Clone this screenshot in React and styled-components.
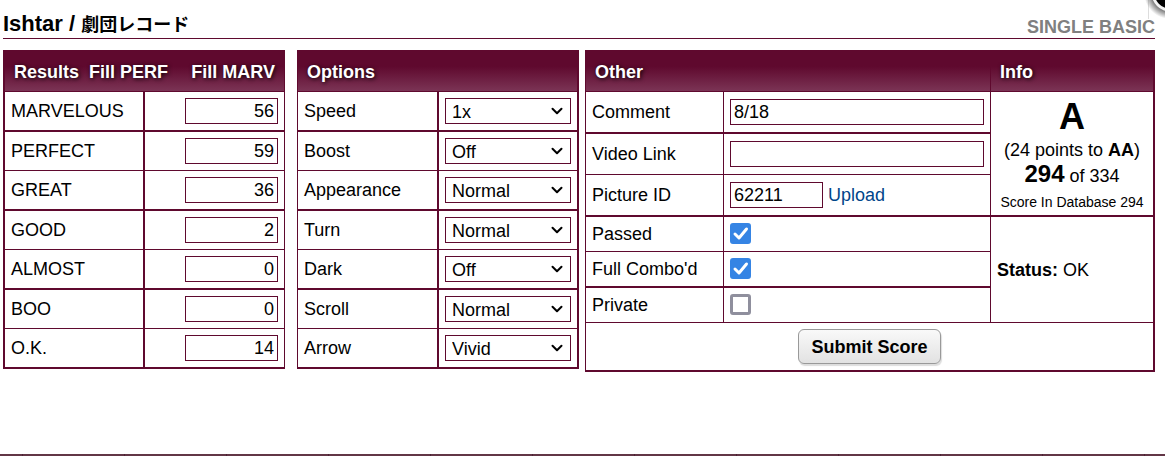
import React, { useState } from "react";
import styled, { createGlobalStyle, css } from "styled-components";

const WINE = "#5f092e";

const GlobalStyle = createGlobalStyle`
  body {
    margin: 0;
    background: #fff;
    color: #000;
    font-family: "Liberation Sans", "Noto Sans CJK JP", sans-serif;
    font-size: 18px;
    line-height: 20px;
  }
  *, *::before, *::after {
    box-sizing: border-box;
  }
`;

const Page = styled.div`
  position: relative;
  display: flex;
  flex-direction: column;
  min-height: 100vh;
  overflow: hidden;
`;

const Main = styled.main`
  padding: 10px 10px 24px 3px;
`;

const TitleBar = styled.header`
  display: flex;
  align-items: flex-end;
  justify-content: space-between;
  height: 29px;
  border-bottom: 1px solid ${WINE};
`;

const Title = styled.h1`
  margin: 0;
  font-size: 22px;
  line-height: 26px;
`;

const Artist = styled.span`
  font-size: 18px;
`;

const Mode = styled.span`
  color: #808080;
  font-weight: bold;
  line-height: 22px;
`;

const Panels = styled.form`
  display: grid;
  grid-template-columns: 282px 288px minmax(480px, 1fr);
  align-items: start;
  column-gap: 6px;
  margin-top: 11px;
`;

const OptionsSlot = styled.div`
  padding-left: 6px;
`;

const Table = styled.table`
  width: 100%;
  table-layout: fixed;
  border-collapse: separate;
  border-spacing: 0;
  border-style: solid;
  border-color: ${WINE};
  border-width: 0 ${(p) => p.$right}px 0 ${(p) => p.$left}px;
`;

const Col = styled.col`
  width: ${(p) => (p.$width ? `${p.$width}px` : "auto")};
`;

const HeadCell = styled.th`
  height: 42px;
  padding: 2px 9px 0;
  border-bottom: 1px solid ${WINE};
  background: linear-gradient(${WINE} 40%, #7b3455);
  color: #fff;
  text-align: left;
  text-shadow: 1px 1px 4px #000;
  ${(p) => p.$divided && css`border-right: 1px solid ${WINE};`}
`;

const HeadRow = styled.div`
  display: flex;
  gap: 10px;
`;

const FillButton = styled.button`
  padding: 0;
  border: 0;
  background: none;
  color: inherit;
  font: inherit;
  text-shadow: inherit;
  cursor: pointer;

  &:last-child {
    margin-left: auto;
  }
`;

const Cell = styled.td`
  height: ${(p) => p.$height || 38}px;
  padding: 0 6px;
  border: 0 solid ${WINE};
  border-right-width: ${(p) => p.$divider || 0}px;
  border-bottom-width: ${(p) => p.$line || 1}px;
  text-align: ${(p) => p.$align || "left"};
  vertical-align: middle;
`;

const TextBox = styled.input`
  display: inline-block;
  width: ${(p) => (p.$wide ? "100%" : "93px")};
  height: 26px;
  padding: 1px 3px 0;
  border: 1px solid ${WINE};
  border-radius: 0;
  background: #fff;
  color: #000;
  font: inherit;
  text-align: ${(p) => p.$align || "left"};
  vertical-align: middle;
`;

const SelectWrap = styled.div`
  display: grid;
  align-items: center;

  > * {
    grid-area: 1 / 1;
  }
`;

const Select = styled.select`
  appearance: none;
  width: 100%;
  height: 26px;
  padding: 1px 24px 0 6px;
  border: 1px solid ${WINE};
  border-radius: 0;
  background: #fff;
  color: #000;
  font: inherit;
`;

const Chevron = styled.svg`
  justify-self: end;
  margin-right: 8px;
  pointer-events: none;
`;

const CheckWrap = styled.div`
  display: grid;
  justify-content: start;
  height: 22px;

  > * {
    grid-area: 1 / 1;
  }
`;

const CheckBox = styled.input`
  appearance: none;
  width: 21px;
  height: 21px;
  margin: 0;
  border: 3px solid #8f8f9d;
  border-radius: 3px;
  background: #fff;

  &:checked {
    border-color: #3584e4;
    background: #3584e4;
  }
  & + svg {
    display: none;
    pointer-events: none;
  }
  &:checked + svg {
    display: block;
  }
`;

const UploadLink = styled.a`
  margin-left: 5px;
  color: #00458a;
  text-decoration: none;
  vertical-align: middle;
`;

const Grade = styled.div`
  font-size: 36px;
  font-weight: bold;
  line-height: 46px;
`;

const InfoLine = styled.div`
  line-height: ${(p) => p.$line || 20}px;
  white-space: nowrap;
`;

const Score = styled.strong`
  font-size: 24px;
`;

const Small = styled.div`
  font-size: 14px;
  line-height: 24px;
  white-space: nowrap;
`;

const Submit = styled.button`
  height: 35px;
  padding: 0 12px;
  border: 1px solid #999;
  border-radius: 6px;
  background: linear-gradient(#f9f9f9, #e2e2e2);
  box-shadow: 1px 2px 1px #ddd;
  color: #000;
  font: inherit;
  font-weight: bold;
  vertical-align: middle;
`;

const Footer = styled.footer`
  height: 2px;
  margin-top: auto;
  background: repeating-linear-gradient(90deg, #623646 0 22px, #4c2234 22px 23px, #623646 23px 102px);
`;

const CornerBadge = styled.svg`
  position: absolute;
  top: 0;
  right: 0;
`;

const TOTAL_STEPS = 167;

const results = [
  ["MARVELOUS", 56],
  ["PERFECT", 59],
  ["GREAT", 36],
  ["GOOD", 2],
  ["ALMOST", 0],
  ["BOO", 0],
  ["O.K.", 14],
];

const options = [
  ["Speed", "1x"],
  ["Boost", "Off"],
  ["Appearance", "Normal"],
  ["Turn", "Normal"],
  ["Dark", "Off"],
  ["Scroll", "Normal"],
  ["Arrow", "Vivid"],
];

// rules alternate between thick and thin
const rule = (i) => (i % 2 === 0 ? 2 : 1);

const Results = () => {
  const [scores, setScores] = useState(results.map((r) => r[1]));

  const change = (i, value) => {
    setScores(scores.map((s, n) => (n === i ? value : s)));
  };

  // give the steps that are left to one judgement
  const fill = (target) => {
    const others = scores.reduce((sum, s, n) => (n === target ? sum : sum + Number(s)), 0);
    change(target, Math.max(0, TOTAL_STEPS - others));
  };

  return (
    <Table $left={2} $right={1}>
      <colgroup>
        <Col $width={140} />
        <Col />
      </colgroup>
      <thead>
        <tr>
          <HeadCell colSpan={2}>
            <HeadRow>
              <span>Results</span>
              <FillButton type="button" onClick={() => fill(1)}>Fill PERF</FillButton>
              <FillButton type="button" onClick={() => fill(0)}>Fill MARV</FillButton>
            </HeadRow>
          </HeadCell>
        </tr>
      </thead>
      <tbody>
        {results.map(([name], i) => (
          <tr key={name}>
            <Cell $height={38 + rule(i)} $line={rule(i)} $divider={2}>
              <label htmlFor={name}>{name}</label>
            </Cell>
            <Cell $height={38 + rule(i)} $line={rule(i)} $align="right">
              <TextBox
                id={name}
                $align="right"
                value={scores[i]}
                onChange={(e) => change(i, e.target.value)}
              />
            </Cell>
          </tr>
        ))}
      </tbody>
    </Table>
  );
};

const OptionSelect = ({ id, value }) => (
  <SelectWrap>
    <Select id={id} defaultValue={value}>
      <option>{value}</option>
    </Select>
    <Chevron width="12" height="8" viewBox="0 0 12 8" aria-hidden="true">
      <path
        d="M1.5 1.7 L6 6.2 L10.5 1.7"
        fill="none"
        stroke="#000"
        strokeWidth="2"
        strokeLinecap="round"
        strokeLinejoin="round"
      />
    </Chevron>
  </SelectWrap>
);

const Options = () => (
  <Table $left={1} $right={2}>
    <colgroup>
      <Col $width={141} />
      <Col />
    </colgroup>
    <thead>
      <tr>
        <HeadCell colSpan={2}>Options</HeadCell>
      </tr>
    </thead>
    <tbody>
      {options.map(([name, value], i) => (
        <tr key={name}>
          <Cell $height={38 + rule(i)} $line={rule(i)} $divider={2}>
            <label htmlFor={name}>{name}</label>
          </Cell>
          <Cell $height={38 + rule(i)} $line={rule(i)}>
            <OptionSelect id={name} value={value} />
          </Cell>
        </tr>
      ))}
    </tbody>
  </Table>
);

const Check = ({ id, checked }) => (
  <CheckWrap>
    <CheckBox type="checkbox" id={id} defaultChecked={checked} />
    <svg width="21" height="21" viewBox="0 0 21 21" aria-hidden="true">
      <path
        d="M5 11 L9 15 L16.5 6"
        fill="none"
        stroke="#fff"
        strokeWidth="3"
        strokeLinecap="round"
        strokeLinejoin="round"
      />
    </svg>
  </CheckWrap>
);

const Other = () => (
  <Table $left={1} $right={2}>
    <colgroup>
      <Col $width={138} />
      <Col />
      <Col $width={162} />
    </colgroup>
    <thead>
      <tr>
        <HeadCell colSpan={2} $divided>Other</HeadCell>
        <HeadCell>Info</HeadCell>
      </tr>
    </thead>
    <tbody>
      <tr>
        <Cell $height={42} $line={2} $divider={1}><label htmlFor="comment">Comment</label></Cell>
        <Cell $height={42} $line={2} $divider={1}>
          <TextBox id="comment" $wide defaultValue="8/18" />
        </Cell>
        <Cell rowSpan={3} $line={2} $align="center">
          <Grade>A</Grade>
          <InfoLine>(24 points to <strong>AA</strong>)</InfoLine>
          <InfoLine $line={28}><Score>294</Score> of 334</InfoLine>
          <Small>Score In Database 294</Small>
        </Cell>
      </tr>
      <tr>
        <Cell $height={41} $divider={1}><label htmlFor="video">Video Link</label></Cell>
        <Cell $height={41} $divider={1}><TextBox id="video" $wide /></Cell>
      </tr>
      <tr>
        <Cell $height={42} $line={2} $divider={1}><label htmlFor="picture">Picture ID</label></Cell>
        <Cell $height={42} $line={2} $divider={1}>
          <TextBox id="picture" defaultValue="62211" />
          <UploadLink href="#upload">Upload</UploadLink>
        </Cell>
      </tr>
      <tr>
        <Cell $height={35} $divider={1}><label htmlFor="passed">Passed</label></Cell>
        <Cell $height={35} $divider={1}><Check id="passed" checked /></Cell>
        <Cell rowSpan={3}><strong>Status:</strong> OK</Cell>
      </tr>
      <tr>
        <Cell $height={36} $line={2} $divider={1}><label htmlFor="combo">Full Combo'd</label></Cell>
        <Cell $height={36} $line={2} $divider={1}><Check id="combo" checked /></Cell>
      </tr>
      <tr>
        <Cell $height={35} $divider={1}><label htmlFor="private">Private</label></Cell>
        <Cell $height={35} $divider={1}><Check id="private" /></Cell>
      </tr>
      <tr>
        <Cell $height={49} $line={2} colSpan={3} $align="center">
          <Submit type="submit">Submit Score</Submit>
        </Cell>
      </tr>
    </tbody>
  </Table>
);

const App = () => (
  <>
    <GlobalStyle />
    <Page>
      <Main>
        <TitleBar>
          <Title>Ishtar / <Artist lang="ja">劇団レコード</Artist></Title>
          <Mode>SINGLE BASIC</Mode>
        </TitleBar>
        <Panels onSubmit={(e) => e.preventDefault()}>
          <Results />
          <OptionsSlot><Options /></OptionsSlot>
          <Other />
        </Panels>
      </Main>
      <Footer />
      <CornerBadge width="20" height="20" viewBox="0 0 20 20" aria-hidden="true">
        <defs>
          <radialGradient id="shade" gradientUnits="userSpaceOnUse" cx="25" cy="-7" r="26">
            <stop offset="0.7" stopColor="#777" />
            <stop offset="1" stopColor="#777" stopOpacity="0" />
          </radialGradient>
        </defs>
        <path d="M3.5 0 V19" stroke="#ddd" />
        <circle cx="25" cy="-7" r="26" fill="url(#shade)" />
        <circle cx="25" cy="-7" r="18.5" fill="#f4f4f4" />
        <circle cx="25" cy="-7" r="15.5" fill="#000" />
      </CornerBadge>
    </Page>
  </>
);

export default App;
